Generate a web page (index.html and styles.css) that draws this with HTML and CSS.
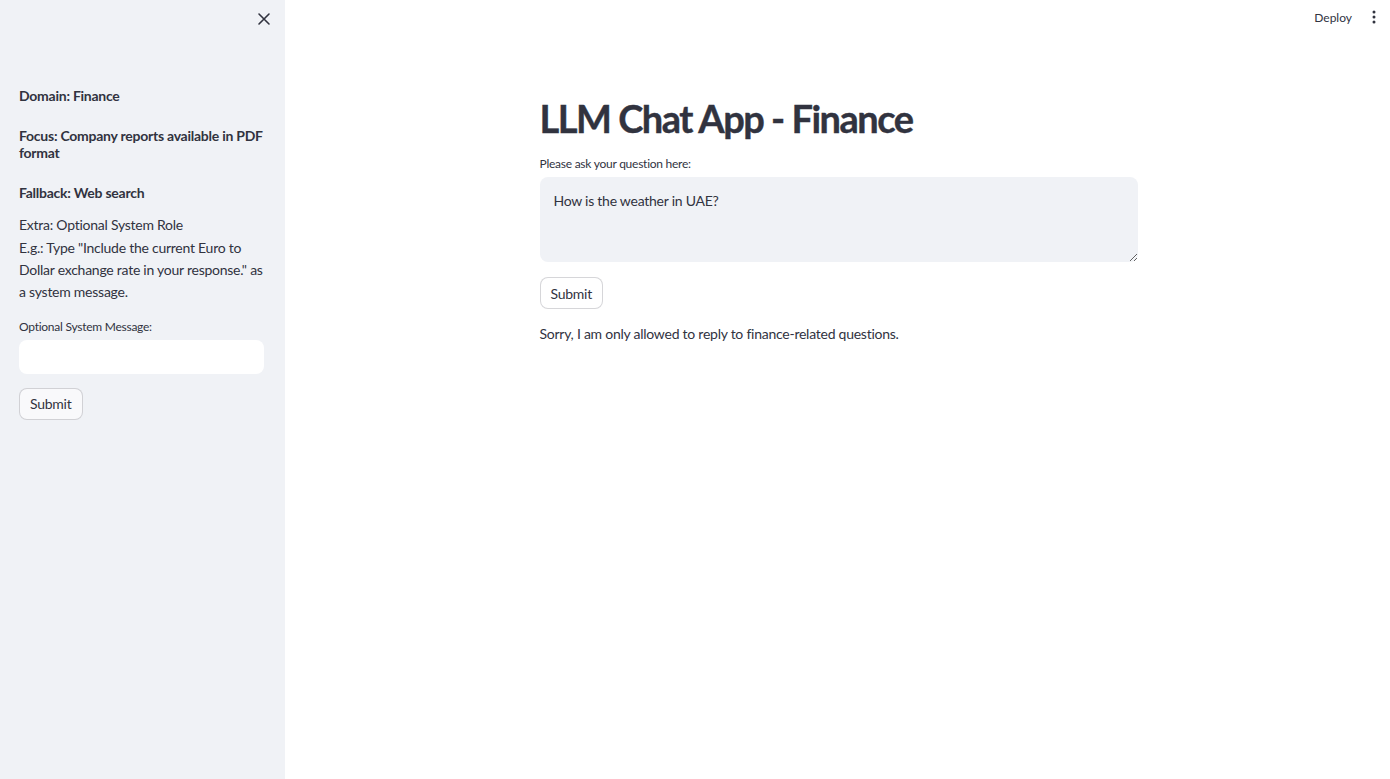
FILE: index.html
```html
<!DOCTYPE html>
<html lang="en">
<head>
<meta charset="utf-8">
<title>LLM Chat App - Finance</title>
<link rel="stylesheet" href="styles.css">
</head>
<body>
<div class="app">
  <aside class="sidebar">
    <div class="sidebar-top">
      <button class="close-btn" aria-label="Close sidebar">
        <svg width="14" height="14" viewBox="0 0 14 14"><path d="M2 2 L12 12 M12 2 L2 12" stroke="#31333f" stroke-width="1.6" stroke-linecap="round"/></svg>
      </button>
    </div>
    <div class="sidebar-content">
      <h5 class="side-h">Domain: Finance</h5>
      <h5 class="side-h focus">Focus: Company reports available in PDF format</h5>
      <h5 class="side-h fallback">Fallback: Web search</h5>
      <p class="side-p">Extra: Optional System Role<br>E.g.: Type "Include the current Euro to Dollar exchange rate in your response." as a system message.</p>
      <label class="label">Optional System Message:</label>
      <input class="text-input" type="text">
      <button class="btn side-btn">Submit</button>
    </div>
  </aside>
  <main class="main">
    <header class="topbar">
      <span class="deploy">Deploy</span>
      <svg class="menu" width="4" height="14" viewBox="0 0 4 14"><circle cx="2" cy="2" r="1.5" fill="#31333f"/><circle cx="2" cy="7" r="1.5" fill="#31333f"/><circle cx="2" cy="12" r="1.5" fill="#31333f"/></svg>
    </header>
    <section class="block">
      <h1 class="title">LLM Chat App - Finance</h1>
      <label class="label">Please ask your question here:</label>
      <textarea class="textarea">How is the weather in UAE?</textarea>
      <button class="btn main-btn">Submit</button>
      <p class="answer">Sorry, I am only allowed to reply to finance-related questions.</p>
    </section>
  </main>
</div>
</body>
</html>
```

FILE: styles.css
```css
* { box-sizing: border-box; }
html, body { margin: 0; padding: 0; height: 100%; }
body {
  font-family: "Lato", "Noto Sans", sans-serif;
  color: #31333f;
  background: #ffffff;
  letter-spacing: -0.25px;
}
.app { display: flex; height: 779px; }
.sidebar {
  width: 285px;
  flex: 0 0 285px;
  background: #f0f2f6;
  display: flex;
  flex-direction: column;
}
.sidebar-top {
  display: flex;
  justify-content: flex-end;
  padding: 12px 14px 0 0;
  height: 88px;
}
.close-btn {
  background: none;
  border: none;
  padding: 0;
  width: 14px;
  height: 14px;
  cursor: pointer;
  display: flex;
}
.sidebar-content {
  padding: 0 20px 0 19px;
  display: flex;
  flex-direction: column;
  align-items: flex-start;
}
.side-h {
  margin: 0 0 23px 0;
  font-size: 14px;
  font-weight: 700;
  line-height: 1.2;
}
.side-h.focus { margin-bottom: 24px; }
.side-h.fallback { margin-bottom: 12px; }
.side-p {
  margin: 0 0 13px 0;
  font-size: 14px;
  line-height: 22.4px;
}
.label {
  display: block;
  font-size: 12px;
  line-height: 20px;
  margin-bottom: 3px;
}
.text-input {
  width: calc(100% - 1px);
  height: 34px;
  border: none;
  border-radius: 8px;
  background: #ffffff;
  outline: none;
  margin-bottom: 14px;
}
.btn {
  font-family: inherit;
  font-size: 14px;
  letter-spacing: -0.25px;
  color: #31333f;
  background: #ffffff;
  border: 1px solid rgba(49, 51, 63, 0.2);
  border-radius: 8px;
  height: 32px;
  padding: 0 10px;
  cursor: pointer;
}
.side-btn { background: #f9f9fb; }
.main { flex: 1; position: relative; padding-left: 2px; }
.topbar {
  height: 34px;
  display: flex;
  align-items: center;
  justify-content: flex-end;
  gap: 20px;
  padding: 0 14px 0 0;
  letter-spacing: 0;
}
.deploy { font-size: 12px; }
.menu { display: block; }
.block {
  width: 598px;
  margin: 57px auto 0;
  display: flex;
  flex-direction: column;
  align-items: flex-start;
}
.title {
  margin: 0 0 9px 0;
  font-size: 38px;
  font-weight: 700;
  line-height: 54px;
  letter-spacing: -1.5px;
  -webkit-text-stroke: 0.4px #31333f;
}
.textarea {
  width: 100%;
  height: 85px;
  border: none;
  border-radius: 8px;
  background: #f0f2f6;
  font-family: inherit;
  font-size: 14px;
  letter-spacing: -0.25px;
  color: #31333f;
  padding: 11px 14px;
  line-height: 25px;
  margin: 0 0 15px 0;
  outline: none;
}
.main-btn { margin-bottom: 12px; }
.answer {
  margin: 0;
  font-size: 14px;
  line-height: 25.6px;
}
```
